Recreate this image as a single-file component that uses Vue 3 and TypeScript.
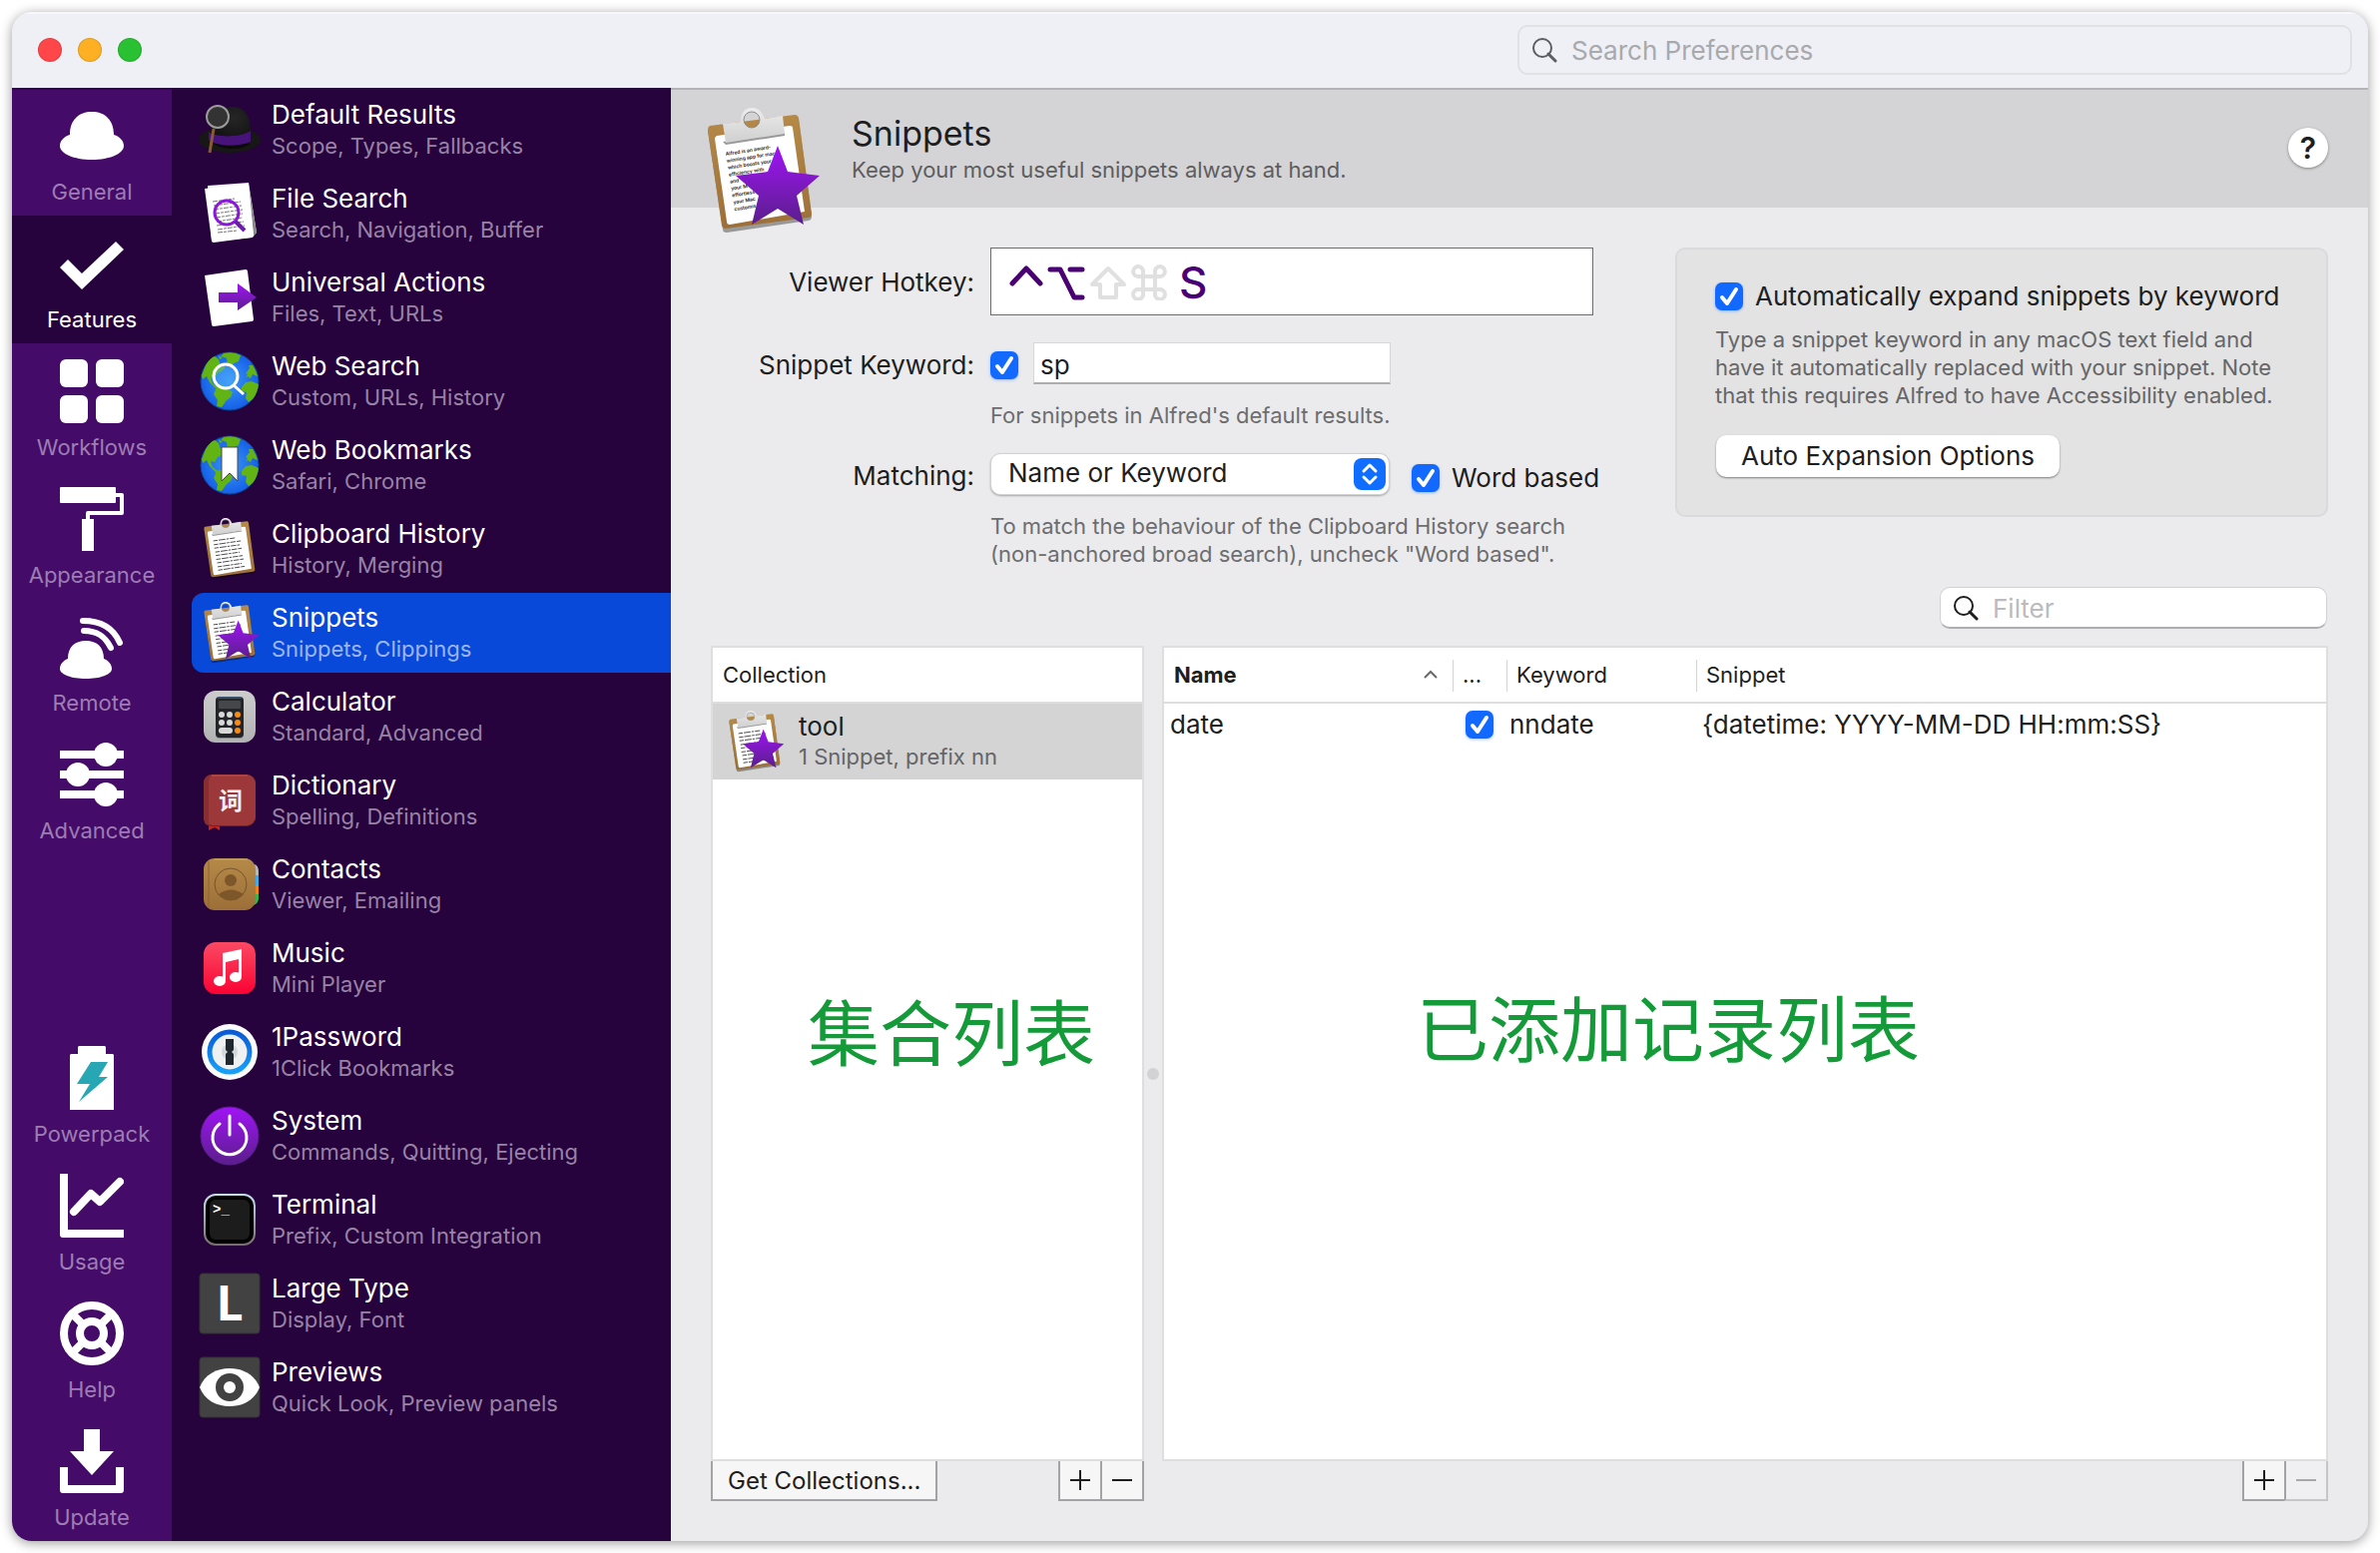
<script setup lang="ts">
import { ref } from 'vue'

interface NavItem {
  id: string
  label: string
}

interface Feature {
  id: string
  title: string
  detail: string
}

interface Snippet {
  name: string
  enabled: boolean
  keyword: string
  content: string
}

const topNav: NavItem[] = [
  { id: 'general', label: 'General' },
  { id: 'features', label: 'Features' },
  { id: 'workflows', label: 'Workflows' },
  { id: 'appearance', label: 'Appearance' },
  { id: 'remote', label: 'Remote' },
  { id: 'advanced', label: 'Advanced' },
]

const bottomNav: NavItem[] = [
  { id: 'powerpack', label: 'Powerpack' },
  { id: 'usage', label: 'Usage' },
  { id: 'help', label: 'Help' },
  { id: 'update', label: 'Update' },
]

const features: Feature[] = [
  { id: 'results', title: 'Default Results', detail: 'Scope, Types, Fallbacks' },
  { id: 'files', title: 'File Search', detail: 'Search, Navigation, Buffer' },
  { id: 'actions', title: 'Universal Actions', detail: 'Files, Text, URLs' },
  { id: 'web', title: 'Web Search', detail: 'Custom, URLs, History' },
  { id: 'bookmarks', title: 'Web Bookmarks', detail: 'Safari, Chrome' },
  { id: 'clipboard', title: 'Clipboard History', detail: 'History, Merging' },
  { id: 'snippets', title: 'Snippets', detail: 'Snippets, Clippings' },
  { id: 'calculator', title: 'Calculator', detail: 'Standard, Advanced' },
  { id: 'dictionary', title: 'Dictionary', detail: 'Spelling, Definitions' },
  { id: 'contacts', title: 'Contacts', detail: 'Viewer, Emailing' },
  { id: 'music', title: 'Music', detail: 'Mini Player' },
  { id: 'password', title: '1Password', detail: '1Click Bookmarks' },
  { id: 'system', title: 'System', detail: 'Commands, Quitting, Ejecting' },
  { id: 'terminal', title: 'Terminal', detail: 'Prefix, Custom Integration' },
  { id: 'largetype', title: 'Large Type', detail: 'Display, Font' },
  { id: 'previews', title: 'Previews', detail: 'Quick Look, Preview panels' },
]

const activeNav = ref('features')
const activeFeature = ref('snippets')
const keywordEnabled = ref(true)
const keyword = ref('sp')
const matching = ref('Name or Keyword')
const wordBased = ref(true)
const autoExpand = ref(true)
const query = ref('')
const filter = ref('')
const snippets = ref<Snippet[]>([
  { name: 'date', enabled: true, keyword: 'nndate', content: '{datetime: YYYY-MM-DD HH:mm:SS}' },
])
</script>

<template>
  <svg class="sprite" aria-hidden="true">
    <defs>
      <linearGradient id="purple" x1="0" y1="0" x2="0" y2="1">
        <stop offset="0" stop-color="#a014f5" />
        <stop offset="1" stop-color="#5a1e8c" />
      </linearGradient>
      <linearGradient id="steel" x1="0" y1="0" x2="0" y2="1">
        <stop offset="0" stop-color="#ececec" />
        <stop offset="1" stop-color="#cfcfcf" />
      </linearGradient>
      <linearGradient id="wood" x1="0" y1="0" x2="0" y2="1">
        <stop offset="0" stop-color="#b58a48" />
        <stop offset="1" stop-color="#9c6f38" />
      </linearGradient>
      <linearGradient id="red" x1="0" y1="0" x2="0" y2="1">
        <stop offset="0" stop-color="#fb4a63" />
        <stop offset="1" stop-color="#fa0333" />
      </linearGradient>
      <linearGradient id="blue" x1="0" y1="0" x2="0" y2="1">
        <stop offset="0" stop-color="#0a5ad6" />
        <stop offset="1" stop-color="#16a0fa" />
      </linearGradient>
      <linearGradient id="grey" x1="0" y1="0" x2="0" y2="1">
        <stop offset="0" stop-color="#cdcdcd" />
        <stop offset="1" stop-color="#b2b2b2" />
      </linearGradient>
      <linearGradient id="bezel" x1="0" y1="0" x2="0" y2="1">
        <stop offset="0" stop-color="#c4dcee" />
        <stop offset="1" stop-color="#77706c" />
      </linearGradient>
      <radialGradient id="sea">
        <stop offset="0" stop-color="#3a97f5" />
        <stop offset="1" stop-color="#1560e8" />
      </radialGradient>
      <radialGradient id="felt" cx="0.6" cy="0.3" r="0.8">
        <stop offset="0" stop-color="#262626" />
        <stop offset="1" stop-color="#0d0d0d" />
      </radialGradient>
      <g id="board">
        <path d="M15 30L100 19Q103 19 104 22L117 119Q117 122 114 123L32 135Q28 135 28 132L13 34Q13 31 15 30Z" fill="rgba(0,0,0,.35)" transform="translate(0 2)" />
        <path d="M15 30L100 19Q103 19 104 22L117 118Q117 121 114 122L31 133Q28 133 27 130L13 34Q13 31 15 30Z" fill="url(#wood)" />
        <path d="M22 40L95 30Q98 30 98 32L110 116L35 129Q32 129 32 126L20 43Q20 41 22 40Z" fill="#fff" />
      </g>
      <g id="clasp">
        <path d="M28 46L90 37L90 40L31 49Z" fill="rgba(0,0,0,.4)" />
        <path fill-rule="evenodd" d="M28 28L46 26C46 17 50 12 57 12S68 17 70 23L88 20L90 38L31 47ZM57 16A8 8 0 1 0 57 32A8 8 0 1 0 57 16Z" fill="url(#steel)" />
        <circle cx="57" cy="24" r="8" fill="none" stroke="#8d8d8d" stroke-width="1" />
      </g>
      <path id="star" d="M83 50L93 76L125 80L102 100L109 129L83 113L57 129L64 100L41 80L73 76Z" />
      <g id="lines" stroke="#4a4a4a" stroke-width="2" stroke-dasharray="9 2 14 2 5 2 11 2" fill="none">
        <path d="M32 59L76 53M33 67L88 59M34 74L86 67M36 82L90 74M37 89L86 82M38 97L92 89M40 104L94 96M41 112L90 105M42 119L96 111" />
      </g>
      <g id="globe">
        <circle cx="30" cy="30" r="29" fill="url(#sea)" stroke="#0d4593" />
        <g fill="#62b414">
          <path d="M6 14Q10 7 15 5L19 8L21 14L26 16L22 20L18 22L15 27L11 26L13 32L17 35L21 37L16 37L10 31L7 25L3 28L2 24Z" />
          <path d="M24 2Q34 0 41 4L39 10L34 12L31 17L28 13L27 7L21 5ZM19 4L23 7L20 8Z" />
          <path d="M17 36L23 34L29 38L33 41L31 46L27 49L22 56L17 55L18 49L14 43Z" />
          <path d="M46 27L48 23L46 22L50 17L49 14L53 14Q57 20 58 25L53 23L51 27L48 25Z" />
          <path d="M42 36L46 31L52 30L59 33Q58 42 53 48L49 51L46 47L47 41L42 40Z" />
        </g>
      </g>
    </defs>

    <symbol id="nav-general" viewBox="0 0 64 64">
      <path fill="#fff" d="M10 31C10 16 19 8 32 8S54 16 54 31C60 33 64 37 64 42C64 50 50 56 32 56S0 50 0 42C0 37 4 33 10 31Z" />
    </symbol>
    <symbol id="nav-features" viewBox="0 0 64 64">
      <path fill="#fff" d="M0 36L8 28L22 42L56 10L64 18L22 58Z" />
    </symbol>
    <symbol id="nav-workflows" viewBox="0 0 64 64">
      <g fill="#fff">
        <rect width="28" height="28" rx="6" /><rect x="36" width="28" height="28" rx="6" />
        <rect y="36" width="28" height="28" rx="6" /><rect x="36" y="36" width="28" height="28" rx="6" />
      </g>
    </symbol>
    <symbol id="nav-appearance" viewBox="0 0 64 64">
      <rect width="56" height="16" rx="1" fill="#fff" /><rect x="22" y="32" width="12" height="32" fill="#fff" />
      <path d="M56 8H62V26H28V33" fill="none" stroke="#fff" stroke-width="4" stroke-linejoin="round" />
    </symbol>
    <symbol id="nav-remote" viewBox="0 0 64 64">
      <path fill="#fff" d="M8 44C8 32 15 26 26 26S44 32 44 44C49 46 52 50 52 54C52 60 40 64 26 64S0 60 0 54C0 50 3 46 8 44Z" />
      <path d="M23 6C42 6 54 14 60 28M24 16C37 16 45 21 51 33" fill="none" stroke="#fff" stroke-width="6" stroke-linecap="round" />
    </symbol>
    <symbol id="nav-advanced" viewBox="0 0 64 64">
      <path d="M0 12H64M0 32H64M0 52H64" stroke="#fff" stroke-width="8" />
      <g fill="#fff"><circle cx="46" cy="12" r="12" /><circle cx="18" cy="32" r="12" /><circle cx="46" cy="52" r="12" /></g>
    </symbol>
    <symbol id="nav-powerpack" viewBox="0 0 64 64">
      <path fill="#fff" d="M18 1L19 0H45L46 1V8H53L54 9V64H10V9L11 8H18Z" />
      <path fill="#27a6b4" d="M31 16H48L39 31H48L19 56L30 38H17Z" />
    </symbol>
    <symbol id="nav-usage" viewBox="0 0 64 64">
      <path fill="#fff" d="M0 0H8V56H64V64H3Q0 64 0 61Z" />
      <path d="M14 38L31 20L40 28L60 8" fill="none" stroke="#fff" stroke-width="8" stroke-linecap="round" stroke-linejoin="round" />
    </symbol>
    <symbol id="nav-help" viewBox="0 0 64 64">
      <g fill="none" stroke="#fff" stroke-width="8">
        <circle cx="32" cy="32" r="28" /><circle cx="32" cy="32" r="12" />
        <path d="M13 13L23 23M51 13L41 23M13 51L23 41M51 51L41 41" />
      </g>
    </symbol>
    <symbol id="nav-update" viewBox="0 0 64 64">
      <path fill="#fff" d="M24 0H40V22H54L32 46L10 22H24Z" />
      <path fill="#fff" d="M0 38H8V56H56V38H64V61Q64 64 61 64H3Q0 64 0 61Z" />
    </symbol>

    <symbol id="list-results" viewBox="-4 -4 68 68">
      <ellipse cx="30" cy="40" rx="31" ry="13" fill="#171717" />
      <path d="M12 36C16 50 44 50 49 34L50 44C42 52 18 50 12 42Z" fill="#0a0a0a" />
      <path d="M11 38C12 18 18 7 32 7C46 7 51 17 51 34C50 44 16 48 11 38Z" fill="url(#felt)" />
      <path d="M9 32C16 38 42 38 51 31V42C42 47 16 47 9 40Z" fill="#47137a" />
      <path d="M14 29L10 53" stroke="#8a5a34" stroke-width="3" />
      <circle cx="18" cy="17" r="11" fill="#333" stroke="#9b9b9b" stroke-width="2" />
    </symbol>
    <symbol id="list-files" viewBox="-4 -4 68 68">
      <path d="M8 2L49 -1L57 49L52 54L12 58Z" fill="#f3f3f3" />
      <path d="M49 1L57 49L54 53Z" fill="#888" />
      <path d="M5 5L49 0L54 52Q54 54 52 54L14 59Q12 59 12 57Z" fill="#fff" />
      <path d="M13 18L35 15M14 22L41 18M14 26L42 22M15 30L43 26M16 34L43 30M17 38L43 34M17 42L44 38M18 46L45 42M18 49L38 47" stroke="#777" stroke-dasharray="5 1 3 1" />
      <circle cx="27" cy="29" r="12" fill="none" stroke="#8a18d8" stroke-width="3" />
      <path d="M36 38L45 47" stroke="#6a1ea6" stroke-width="4" />
    </symbol>
    <symbol id="list-actions" viewBox="-4 -4 68 68">
      <path d="M5 8L46 2Q48 2 48 4L54 52Q54 54 52 54L14 59Q12 59 12 57Z" fill="#fff" />
      <path d="M19 25H38V16L57 30L38 43V35H19Z" fill="url(#purple)" />
    </symbol>
    <symbol id="list-web" viewBox="-4 -4 68 68">
      <use href="#globe" />
      <circle cx="26" cy="25" r="12" fill="rgba(90,180,255,.35)" stroke="#fff" stroke-width="3" />
      <path d="M34 34L44 43" stroke="#fff" stroke-width="3" />
    </symbol>
    <symbol id="list-bookmarks" viewBox="-4 -4 68 68">
      <use href="#globe" />
      <path d="M22 12H38V46L30 38L22 46Z" fill="#fff" stroke="#4a4a4a" />
    </symbol>
    <symbol id="list-clipboard" viewBox="-4 -4 68 68">
      <g transform="translate(-2 -7) scale(.49)"><use href="#board" /><use href="#lines" /><use href="#clasp" /></g>
    </symbol>
    <symbol id="list-snippets" viewBox="-4 -4 68 68">
      <g transform="translate(-2 -7) scale(.49)"><use href="#board" /><use href="#lines" /><use href="#clasp" /><use href="#star" fill="url(#purple)" /></g>
    </symbol>
    <symbol id="list-calculator" viewBox="-4 -4 68 68">
      <rect x="4" y="4" width="52" height="52" rx="12" fill="url(#grey)" />
      <rect x="16" y="11" width="28" height="41" rx="4" fill="#888" />
      <rect x="16" y="10" width="28" height="41" rx="4" fill="#232528" />
      <path d="M18 11H42" stroke="#4b7ba8" />
      <rect x="19" y="14" width="22" height="8" rx="1" fill="#45474b" />
      <g fill="#d8d8d8">
        <circle cx="22" cy="28" r="3" /><circle cx="30" cy="28" r="3" /><circle cx="22" cy="36" r="3" /><circle cx="30" cy="36" r="3" />
        <rect x="19" y="41" width="14" height="6" rx="3" />
      </g>
      <g fill="#f78b12"><circle cx="38" cy="28" r="3" /><circle cx="38" cy="36" r="3" /><circle cx="38" cy="44" r="3" /></g>
    </symbol>
    <symbol id="list-dictionary" viewBox="-4 -4 68 68">
      <path d="M9 52H20V60L15 57L9 60Z" fill="#c4231f" />
      <rect x="4" y="4" width="52" height="52" rx="9" fill="#6d2224" />
      <rect x="4" y="4" width="52" height="51" rx="9" fill="#9c3839" />
      <path d="M13 4Q4 4 4 13V46Q4 55 9 55V12Q9 6 13 4Z" fill="#872e30" />
      <path d="M12 5H48" stroke="#c4514f" />
    </symbol>
    <symbol id="list-contacts" viewBox="-4 -4 68 68">
      <path d="M54 10Q59 10 59 18V22H54Z" fill="#b9b9b4" /><path d="M54 21H59V31H54Z" fill="#43a9e4" />
      <path d="M54 31H59V40H54Z" fill="#f28318" /><path d="M54 40H59V44Q59 49 54 51Z" fill="#3bb54a" />
      <rect x="4" y="4" width="52" height="52" rx="11" fill="url(#wood)" />
      <path d="M9 7V53" stroke="#8d6430" /><path d="M15 5H48" stroke="#c6a877" />
      <circle cx="31" cy="30" r="16" fill="none" stroke="#77542a" />
      <circle cx="31" cy="26" r="6" fill="#7d5729" />
      <path d="M19 40Q31 31 44 40Q31 52 19 40Z" fill="#7d5729" />
    </symbol>
    <symbol id="list-music" viewBox="-4 -4 68 68">
      <rect x="4" y="4" width="52" height="52" rx="12" fill="url(#red)" />
      <path d="M23 15L42 11V38H39V21L26 24V42H23Z" fill="#fff" />
      <ellipse cx="20" cy="43" rx="6" ry="5" fill="#fff" /><ellipse cx="36" cy="39" rx="6" ry="5" fill="#fff" />
    </symbol>
    <symbol id="list-password" viewBox="-4 -4 68 68">
      <circle cx="30" cy="30" r="28" fill="#fbfbfb" />
      <circle cx="30" cy="30" r="20" fill="#eef0f2" stroke="url(#blue)" stroke-width="5" />
      <circle cx="30" cy="30" r="8" fill="#d5d8da" />
      <path d="M26 17H34V28L32 30L34 32V43H26V32L28 30L26 28Z" fill="#20282f" />
    </symbol>
    <symbol id="list-system" viewBox="-4 -4 68 68">
      <circle cx="30" cy="30" r="29" fill="url(#purple)" stroke="#5a1e8c" />
      <path d="M20 18A17 17 0 1 0 40 18M30 10V29" fill="none" stroke="#fff" stroke-width="3" stroke-linecap="round" />
    </symbol>
    <symbol id="list-terminal" viewBox="-4 -4 68 68">
      <rect x="5" y="5" width="50" height="50" rx="11" fill="#000" stroke="url(#bezel)" stroke-width="2" />
      <rect x="10" y="10" width="40" height="40" rx="6" fill="#1c1c1c" />
    </symbol>
    <symbol id="list-largetype" viewBox="-4 -4 68 68">
      <rect width="60" height="60" rx="3" fill="#424242" stroke="#323232" />
    </symbol>
    <symbol id="list-previews" viewBox="-4 -4 68 68">
      <rect width="60" height="60" rx="3" fill="#424242" stroke="#323232" />
      <path d="M0 30C5 17 17 11 30 11S55 17 60 30C55 43 43 49 30 49S5 43 0 30Z" fill="#fff" />
      <circle cx="30" cy="30" r="14" fill="#424242" /><circle cx="30" cy="30" r="6" fill="#fff" />
    </symbol>
    <symbol id="glass" viewBox="0 0 26 26">
      <circle cx="11" cy="11" r="9" fill="none" stroke="currentColor" stroke-width="2" />
      <path d="M17 17L24 24" stroke="currentColor" stroke-width="3" stroke-linecap="round" />
    </symbol>
  </svg>

  <div class="desktop">
    <div class="window">
      <header class="titlebar">
        <div class="lights">
          <button class="light close" aria-label="Close"></button>
          <button class="light minimise" aria-label="Minimise"></button>
          <button class="light zoom" aria-label="Zoom"></button>
        </div>
        <label class="search">
          <svg class="glass"><use href="#glass" /></svg>
          <input v-model="query" type="text" placeholder="Search Preferences" aria-label="Search Preferences" />
        </label>
      </header>

      <div class="body">
        <nav class="rail" aria-label="Preferences">
          <div>
            <button
              v-for="item in topNav"
              :key="item.id"
              class="rail-item"
              :class="{ active: item.id === activeNav }"
              @click="activeNav = item.id"
            >
              <svg><use :href="'#nav-' + item.id" /></svg>
              <span>{{ item.label }}</span>
            </button>
          </div>
          <div>
            <button
              v-for="item in bottomNav"
              :key="item.id"
              class="rail-item"
              :class="{ active: item.id === activeNav }"
              @click="activeNav = item.id"
            >
              <svg><use :href="'#nav-' + item.id" /></svg>
              <span>{{ item.label }}</span>
            </button>
          </div>
        </nav>

        <nav class="features" aria-label="Features">
          <button
            v-for="item in features"
            :key="item.id"
            class="feature"
            :class="{ active: item.id === activeFeature }"
            @click="activeFeature = item.id"
          >
            <svg viewBox="-4 -4 68 68">
              <use :href="'#list-' + item.id" x="-4" y="-4" width="68" height="68" />
              <text v-if="item.id === 'dictionary'" class="glyph-word" x="31" y="39">词</text>
              <text v-if="item.id === 'terminal'" class="glyph-prompt" x="13" y="24">&gt;_</text>
              <text v-if="item.id === 'largetype'" class="glyph-large" x="30" y="47">L</text>
            </svg>
            <span class="feature-text">
              <span class="feature-title">{{ item.title }}</span>
              <span class="feature-detail">{{ item.detail }}</span>
            </span>
          </button>
        </nav>

        <main class="content">
          <div class="banner">
            <svg class="banner-icon" viewBox="0 0 140 150">
              <use href="#board" />
              <g class="paper-text" transform="rotate(-9 31 60)">
                <text x="31" y="60">Alfred is an award-</text>
                <text x="31" y="67">winning app for mac</text>
                <text x="31" y="74">which boosts your</text>
                <text x="31" y="81">efficiency with</text>
                <text x="31" y="88">and</text>
                <text x="31" y="95">your M</text>
                <text x="31" y="102">effortless</text>
                <text x="31" y="109">your Mac</text>
                <text x="31" y="116">customis</text>
              </g>
              <use href="#clasp" />
              <use href="#star" fill="url(#purple)" />
            </svg>
            <div class="banner-text">
              <h1>Snippets</h1>
              <p>Keep your most useful snippets always at hand.</p>
            </div>
            <button class="help" aria-label="Help">?</button>
          </div>

          <div class="settings">
            <div class="form">
              <label class="form-label hotkey-label" for="hotkey">Viewer Hotkey:</label>
              <button id="hotkey" class="hotkey">
                <svg width="158" height="36" viewBox="0 0 158 36" fill="none" stroke-width="5" stroke-linecap="round" stroke-linejoin="round">
                  <path d="M3 19L17 4L31 19" stroke="#4a0072" />
                  <path d="M41 5H51L65 33H73M61 5H73" stroke="#4a0072" />
                  <g stroke="#e0e0e0" stroke-width="4">
                    <path d="M99 4L115 20H107V33H91V20H83Z" />
                    <path d="M134 12H146M134 25H146M134 12V25M146 12V25M134 12H130A5 5 0 1 1 134 8ZM146 12H150A5 5 0 1 0 146 8ZM134 25H130A5 5 0 1 0 134 29ZM146 25H150A5 5 0 1 1 146 29Z" />
                  </g>
                </svg>
                <span>S</span>
              </button>

              <label class="form-label" for="keyword">Snippet Keyword:</label>
              <div class="field">
                <input v-model="keywordEnabled" type="checkbox" aria-label="Enable snippet keyword" />
                <input id="keyword" v-model="keyword" class="keyword" type="text" />
              </div>
              <p class="note">For snippets in Alfred's default results.</p>

              <label class="form-label matching-row" for="matching">Matching:</label>
              <div class="field matching-row">
                <div class="select">
                  <select id="matching" v-model="matching">
                    <option>Name or Keyword</option>
                    <option>Name</option>
                    <option>Keyword</option>
                  </select>
                  <svg viewBox="0 0 32 32" aria-hidden="true">
                    <rect width="32" height="32" rx="8" fill="#0f6dff" />
                    <path d="M10 13L16 7L22 13M10 19L16 25L22 19" fill="none" stroke="#fff" stroke-width="3" stroke-linecap="round" stroke-linejoin="round" />
                  </svg>
                </div>
                <label class="check"><input v-model="wordBased" type="checkbox" />Word based</label>
              </div>
              <p class="note">To match the behaviour of the Clipboard History search<br />(non-anchored broad search), uncheck "Word based".</p>
            </div>

            <section class="expansion">
              <label class="check"><input v-model="autoExpand" type="checkbox" />Automatically expand snippets by keyword</label>
              <p>Type a snippet keyword in any macOS text field and<br />have it automatically replaced with your snippet. Note<br />that this requires Alfred to have Accessibility enabled.</p>
              <button class="push">Auto Expansion Options</button>
            </section>
          </div>

          <label class="filter">
            <svg class="glass"><use href="#glass" /></svg>
            <input v-model="filter" type="text" placeholder="Filter" aria-label="Filter" />
          </label>

          <div class="lists">
            <section class="pane">
              <div class="sheet">
                <table>
                  <thead>
                    <tr><th>Collection</th></tr>
                  </thead>
                  <tbody>
                    <tr class="selected">
                      <td class="collection">
                        <svg><use href="#list-snippets" /></svg>
                        <div>
                          <div class="collection-name">tool</div>
                          <div class="collection-detail">1 Snippet, prefix nn</div>
                        </div>
                      </td>
                    </tr>
                  </tbody>
                </table>
                <div class="caption caption-left">集合列表</div>
              </div>
              <div class="actions">
                <button class="square text">Get Collections...</button>
                <div class="pair">
                  <button class="square" aria-label="Add collection"><svg viewBox="0 0 22 22"><path d="M1 11H21M11 1V21" /></svg></button>
                  <button class="square" aria-label="Remove collection"><svg viewBox="0 0 22 22"><path d="M1 11H21" /></svg></button>
                </div>
              </div>
            </section>

            <div class="divider"><span></span></div>

            <section class="pane">
              <div class="sheet">
                <table class="snippets">
                  <colgroup>
                    <col class="col-name" /><col class="col-on" /><col class="col-keyword" /><col />
                  </colgroup>
                  <thead>
                    <tr>
                      <th class="sorted">
                        <div>Name<svg viewBox="0 0 16 10"><path d="M2 8L8 2L14 8" /></svg></div>
                      </th>
                      <th>...</th>
                      <th>Keyword</th>
                      <th>Snippet</th>
                    </tr>
                  </thead>
                  <tbody>
                    <tr v-for="row in snippets" :key="row.keyword">
                      <td>{{ row.name }}</td>
                      <td class="on"><input v-model="row.enabled" type="checkbox" :aria-label="'Enable ' + row.name" /></td>
                      <td class="key">{{ row.keyword }}</td>
                      <td>{{ row.content }}</td>
                    </tr>
                  </tbody>
                </table>
                <div class="caption caption-right">已添加记录列表</div>
              </div>
              <div class="actions end">
                <div class="pair">
                  <button class="square" aria-label="Add snippet"><svg viewBox="0 0 22 22"><path d="M1 11H21M11 1V21" /></svg></button>
                  <button class="square" disabled aria-label="Remove snippet"><svg viewBox="0 0 22 22"><path d="M1 11H21" /></svg></button>
                </div>
              </div>
            </section>
          </div>
        </main>
      </div>
    </div>
  </div>
</template>

<style>
body {
  background: #fff;
}
</style>

<style scoped>
* {
  box-sizing: border-box;
}

.sprite {
  position: absolute;
  width: 0;
  height: 0;
}

.desktop {
  display: flex;
  min-height: 100vh;
  padding: 12px;
  font-family: Inter, 'Noto Sans CJK SC', sans-serif;
  font-size: 26px;
  line-height: 32px;
  color: #1e1e1e;
}

.window {
  flex: 1;
  display: flex;
  flex-direction: column;
  border-radius: 20px;
  overflow: hidden;
  background: #ebebed;
  box-shadow: 0 2px 12px rgba(0, 0, 0, 0.4);
}

button,
input,
select {
  font: inherit;
  color: inherit;
  margin: 0;
}

button {
  border: 0;
  padding: 0;
  background: none;
}

h1,
p {
  margin: 0;
}

.titlebar {
  display: flex;
  align-items: center;
  justify-content: space-between;
  height: 76px;
  padding: 0 16px 0 26px;
  background: #eff0f5;
  box-shadow: inset 0 2px 0 #f8f8fa;
}

.lights {
  display: flex;
  gap: 16px;
}

.light {
  width: 24px;
  height: 24px;
  border-radius: 50%;
  border: 1px solid rgba(0, 0, 0, 0.12);
}

.close {
  background: #ff4648;
}

.minimise {
  background: #fdb024;
}

.zoom {
  background: #29c132;
}

.search,
.filter {
  display: flex;
  align-items: center;
  gap: 14px;
  padding: 0 12px;
}

.search {
  width: 836px;
  height: 50px;
  border: 2px solid #e0e1e5;
  border-radius: 10px;
  color: #5c5d61;
}

.search input,
.filter input {
  flex: 1;
  min-width: 0;
  border: 0;
  padding: 2px 0 0;
  background: none;
  outline: none;
}

.search input::placeholder {
  color: #a8a9ad;
  opacity: 1;
}

.glass {
  width: 26px;
  height: 26px;
}

.body {
  flex: 1;
  display: flex;
}

.rail {
  display: flex;
  flex-direction: column;
  justify-content: space-between;
  width: 160px;
  background: #440b68;
  box-shadow: inset 0 2px 0 #2a0442;
}

.rail-item {
  display: flex;
  flex-direction: column;
  align-items: center;
  gap: 10px;
  width: 160px;
  height: 128px;
  padding-top: 16px;
  font-size: 22px;
  line-height: 28px;
  color: #9d7db3;
}

.rail-item svg {
  width: 64px;
  height: 64px;
}

.rail-item.active {
  background: #26033d;
  color: #fff;
}

.features {
  display: flex;
  flex-direction: column;
  gap: 4px;
  width: 500px;
  padding: 2px 0 2px 20px;
  background: #26033d;
}

.feature {
  display: flex;
  align-items: center;
  gap: 8px;
  height: 80px;
  padding-left: 4px;
  border-radius: 12px 0 0 12px;
  color: #fff;
  text-align: left;
}

.feature svg {
  width: 68px;
  height: 68px;
}

.glyph-word {
  font-family: 'Noto Sans CJK SC', sans-serif;
  font-size: 24px;
  font-weight: 700;
  text-anchor: middle;
  fill: #f2eeee;
}

.glyph-prompt {
  font-family: 'Liberation Mono', monospace;
  font-size: 14px;
  font-weight: 700;
  fill: #fff;
}

.glyph-large {
  font-family: 'Open Sans', sans-serif;
  font-size: 48px;
  font-weight: 700;
  text-anchor: middle;
  fill: #fff;
}

.feature.active {
  background: #0849da;
}

.feature-text {
  display: flex;
  flex-direction: column;
}

.feature-detail {
  font-size: 22px;
  line-height: 30px;
  color: #9882a5;
}

.feature.active .feature-detail {
  color: #9cb5f0;
}

.content {
  flex: 1;
  min-width: 0;
  display: flex;
  flex-direction: column;
  padding-bottom: 40px;
}

.banner {
  display: flex;
  align-items: flex-start;
  height: 120px;
  padding: 8px 40px 0 24px;
  background: #d4d4d6;
  box-shadow: inset 0 2px 0 #b4b4b6;
}

.banner-icon {
  width: 140px;
  height: 150px;
}

.paper-text {
  font-size: 5px;
  font-weight: 600;
  fill: #222;
}

.banner-text {
  flex: 1;
  padding: 18px 0 0 17px;
}

.banner-text h1 {
  font-size: 34px;
  line-height: 40px;
  font-weight: 400;
}

.banner-text p {
  padding-top: 2px;
  font-size: 22px;
  line-height: 28px;
  color: #5d5d5f;
}

.help {
  width: 40px;
  height: 40px;
  margin-top: 32px;
  border-radius: 50%;
  background: #fff;
  font-size: 30px;
  line-height: 40px;
  font-weight: 600;
  box-shadow: 0 1px 3px rgba(0, 0, 0, 0.4);
}

.settings {
  display: flex;
  justify-content: space-between;
  align-items: flex-start;
  padding: 40px 40px 0;
}

.form {
  display: grid;
  grid-template-columns: 264px 604px;
  column-gap: 16px;
}

.form-label {
  line-height: 46px;
  text-align: right;
}

.hotkey-label {
  line-height: 70px;
}

.hotkey {
  display: flex;
  align-items: center;
  gap: 12px;
  height: 68px;
  margin-bottom: 27px;
  padding: 2px 0 0 18px;
  border: 1px solid #6c6c6e;
  background: #fff;
  font-size: 44px;
  line-height: 50px;
  font-weight: 500;
  color: #4a0072;
}

.field {
  display: flex;
  align-items: center;
  height: 46px;
}

.keyword {
  width: 358px;
  height: 42px;
  margin: 0 0 4px 15px;
  padding: 4px 6px 0;
  border: 1px solid #d6d6d8;
  border-bottom: 2px solid #adadaf;
  background: #fff;
}

.note {
  grid-column: 2;
  padding-top: 13px;
  font-size: 22px;
  line-height: 28px;
  color: #6d6d6f;
}

.matching-row {
  margin-top: 24px;
}

.select {
  position: relative;
  width: 400px;
  height: 46px;
}

.select select {
  width: 400px;
  height: 42px;
  padding: 0 44px 2px 17px;
  border: 1px solid #d2d2d4;
  border-radius: 10px;
  appearance: none;
  background: #fff;
  box-shadow: 0 1px 2px rgba(0, 0, 0, 0.3);
}

.select svg {
  position: absolute;
  top: 5px;
  right: 4px;
  width: 32px;
  height: 32px;
  pointer-events: none;
}

.check {
  display: flex;
  align-items: center;
  gap: 12px;
  white-space: nowrap;
}

.field .check {
  padding-top: 3px;
  margin-left: 22px;
}

input[type='checkbox'] {
  flex: none;
  width: 28px;
  height: 28px;
  border-radius: 7px;
  border: 1px solid #c4c4c6;
  appearance: none;
  background: #fff;
}

input[type='checkbox']:checked {
  border: 0;
  background: #1269ff
    url("data:image/svg+xml,%3Csvg xmlns='http://www.w3.org/2000/svg' viewBox='0 0 28 28'%3E%3Cpath d='M7 15L12 21L21 7' fill='none' stroke='white' stroke-width='4' stroke-linecap='round' stroke-linejoin='round'/%3E%3C/svg%3E");
  box-shadow: 0 1px 3px rgba(18, 105, 255, 0.4);
}

.expansion {
  width: 654px;
  height: 270px;
  padding: 30px 38px;
  border: 2px solid #dadadc;
  border-radius: 10px;
  background: #e3e3e3;
}

.expansion p {
  padding: 12px 0 26px;
  font-size: 22px;
  line-height: 28px;
  color: #666668;
  white-space: nowrap;
}

.expansion .check {
  height: 34px;
}

.push {
  height: 42px;
  margin-left: 1px;
  padding: 0 25px;
  border-radius: 10px;
  background: #fff;
  line-height: 40px;
  box-shadow: 0 1px 2px rgba(0, 0, 0, 0.45);
}

.filter {
  align-self: flex-end;
  width: 388px;
  height: 42px;
  margin: 19px 41px 17px 0;
  border: 1px solid #d2d2d4;
  border-bottom: 2px solid #adadaf;
  border-radius: 10px;
  background: #fff;
}

.filter input::placeholder {
  color: #bbbbbd;
  opacity: 1;
}

.lists {
  flex: 1;
  display: grid;
  grid-template-columns: 434px 18px 1fr;
  padding: 0 40px;
}

.pane {
  display: flex;
  flex-direction: column;
}

.sheet {
  position: relative;
  flex: 1;
  border: 2px solid #dededf;
  background: #fff;
}

table {
  width: 100%;
  border-collapse: collapse;
  table-layout: fixed;
}

th {
  position: relative;
  height: 55px;
  padding: 0 10px;
  border-bottom: 2px solid #dededf;
  font-size: 22px;
  font-weight: 400;
  text-align: left;
}

th + th::before {
  content: '';
  position: absolute;
  top: 12px;
  left: 0;
  width: 1px;
  height: 32px;
  background: #d4d4d6;
}

.sorted {
  font-weight: 700;
}

.sorted div {
  display: flex;
  align-items: center;
  justify-content: space-between;
  padding-right: 4px;
}

.sorted svg {
  width: 16px;
  height: 10px;
  fill: none;
  stroke: #6a6a6c;
  stroke-width: 2;
}

td {
  height: 42px;
  padding: 0 6px;
}

.on input {
  display: block;
  margin-left: 7px;
}

.key {
  padding: 0 3px;
}

.col-name {
  width: 289px;
}

.col-on {
  width: 54px;
}

.col-keyword {
  width: 190px;
}

.selected {
  background: #d4d4d4;
}

.collection {
  display: flex;
  align-items: center;
  gap: 10px;
  height: 76px;
  padding: 0 8px;
}

.collection svg {
  width: 68px;
  height: 68px;
}

.collection-name {
  line-height: 30px;
}

.collection-detail {
  font-size: 22px;
  line-height: 30px;
  color: #656567;
}

.caption {
  position: absolute;
  font-family: 'Noto Sans CJK SC', sans-serif;
  font-size: 72px;
  line-height: 100px;
  white-space: nowrap;
  color: #149a38;
}

.caption-left {
  top: 332px;
  left: 95px;
}

.caption-right {
  top: 328px;
  left: 253px;
}

.divider {
  display: flex;
  align-items: center;
  justify-content: center;
}

.divider span {
  width: 12px;
  height: 12px;
  border-radius: 50%;
  background: #d2d2d4;
}

.actions {
  display: flex;
  justify-content: space-between;
}

.actions.end {
  justify-content: flex-end;
}

.pair {
  display: flex;
}

.square {
  display: flex;
  align-items: center;
  justify-content: center;
  width: 44px;
  height: 40px;
  border: 2px solid #a3a3a5;
  border-top: 0;
  background: #f6f6f6;
}

.square + .square {
  margin-left: -2px;
}

.square.text {
  width: auto;
  padding: 2px 15px 0;
  font-size: 24px;
}

.square svg {
  width: 22px;
  height: 22px;
  stroke: #1e1e1e;
  stroke-width: 2;
}

.square:disabled {
  border-color: #c6c6c8;
  border-left-color: #a3a3a5;
  background: #f0f0f2;
}

.square:disabled svg {
  stroke: #a8a8aa;
}
</style>
